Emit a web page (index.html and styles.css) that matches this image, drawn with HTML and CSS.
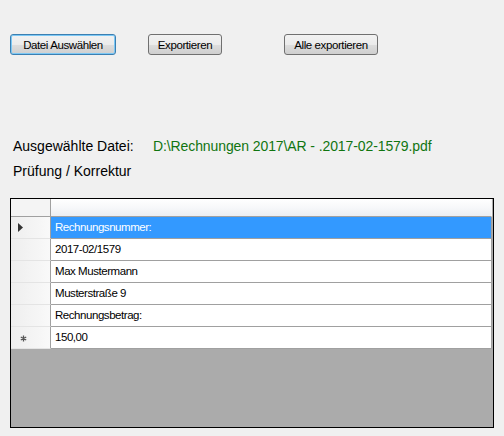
FILE: index.html
```html
<!DOCTYPE html>
<html lang="de">
<head>
<meta charset="utf-8">
<title>Rechnungen</title>
<link rel="stylesheet" href="styles.css">
</head>
<body>
<div class="window">
  <div class="toolbar">
    <button class="btn btn-focus btn-select">Datei Auswählen</button>
    <button class="btn btn-export">Exportieren</button>
    <button class="btn btn-all">Alle exportieren</button>
  </div>
  <div class="fileinfo">
    <span class="label">Ausgewählte Datei:</span>
    <span class="path">D:\Rechnungen 2017\AR - .2017-02-1579.pdf</span>
  </div>
  <div class="section">Prüfung / Korrektur</div>
  <div class="grid">
    <div class="row head">
      <div class="rh corner"></div>
      <div class="cell colhead"></div>
    </div>
    <div class="row selected">
      <div class="rh"><svg class="arrow" width="5" height="9" viewBox="0 0 5 9"><path d="M0 0 L5 4.5 L0 9 Z" fill="#333"/></svg></div>
      <div class="cell">Rechnungsnummer:</div>
    </div>
    <div class="row">
      <div class="rh"></div>
      <div class="cell">2017-02/1579</div>
    </div>
    <div class="row">
      <div class="rh"></div>
      <div class="cell">Max Mustermann</div>
    </div>
    <div class="row">
      <div class="rh"></div>
      <div class="cell">Musterstraße 9</div>
    </div>
    <div class="row">
      <div class="rh"></div>
      <div class="cell">Rechnungsbetrag:</div>
    </div>
    <div class="row">
      <div class="rh"><svg class="star" width="7" height="7" viewBox="0 0 7 7"><path d="M3.5 0.5 L3.5 6.5 M0.8 2 L6.2 5 M0.8 5 L6.2 2" stroke="#555" stroke-width="1.3"/></svg></div>
      <div class="cell">150,00</div>
    </div>
  </div>
</div>
</body>
</html>
```
FILE: styles.css
```css
html, body {
  margin: 0;
  padding: 0;
  background: #f0f0f0;
}
.window {
  width: 504px;
  height: 436px;
  overflow: hidden;
  font-family: "Liberation Sans", Arial, sans-serif;
  color: #000;
}
.toolbar {
  display: flex;
  padding: 34px 0 0 10px;
}
.btn {
  font-family: "Liberation Sans", Arial, sans-serif;
  font-size: 11.5px;
  letter-spacing: -0.4px;
  height: 21px;
  padding: 0;
  margin: 0;
  border: 1px solid #707070;
  border-radius: 3px;
  background: linear-gradient(to bottom, #f2f2f2 0%, #ebebeb 50%, #dddddd 51%, #cfcfcf 100%);
  color: #000;
  line-height: 18px;
  box-sizing: border-box;
}
.btn-focus {
  border-color: #3c7fb1;
  box-shadow: inset 0 0 0 1px #7cc8f5;
}
.btn-select { width: 106px; }
.btn-export { width: 74px; margin-left: 32px; }
.btn-all { width: 94px; margin-left: 62px; }

.fileinfo {
  margin-top: 83px;
  padding-left: 13px;
  display: flex;
  font-size: 14px;
  line-height: 16px;
}
.label { width: 140px; }
.path { color: #107510; letter-spacing: -0.1px; }
.section {
  margin-top: 9px;
  padding-left: 13px;
  font-size: 14px;
  line-height: 16px;
}
.grid {
  margin: 19px 0 0 10px;
  width: 484px;
  height: 230px;
  box-sizing: border-box;
  border: 1px solid #000;
  background: #ababab;
  display: flex;
  flex-direction: column;
}
.row {
  display: flex;
  height: 22px;
  width: 481px;
}
.row.head { height: 18px; }
.rh {
  width: 40px;
  box-sizing: border-box;
  border-right: 1px solid #a0a0a0;
  border-bottom: 1px solid #e4e4e4;
  background: linear-gradient(to right, #eeeeee, #f9f9f9);
  display: flex;
  align-items: center;
  padding-left: 7px;
}
.rh.corner {
  background: #f4f4f4;
  border-bottom: 1px solid #a0a0a0;
}
.cell {
  flex: 1;
  box-sizing: border-box;
  border-right: 1px solid #a0a0a0;
  border-bottom: 1px solid #a0a0a0;
  background: #fff;
  font-size: 11.5px;
  letter-spacing: -0.45px;
  line-height: 21px;
  padding-left: 4px;
  white-space: nowrap;
}
.colhead {
  background: linear-gradient(to bottom, #ffffff 0%, #f7f8fa 50%, #eceef2 100%);
  border-right: 1px solid #f7f7f7;
}
.selected .cell {
  background: #3399ff;
  color: #fff;
}
.star { margin-left: 2px; margin-top: 2px; }
```
